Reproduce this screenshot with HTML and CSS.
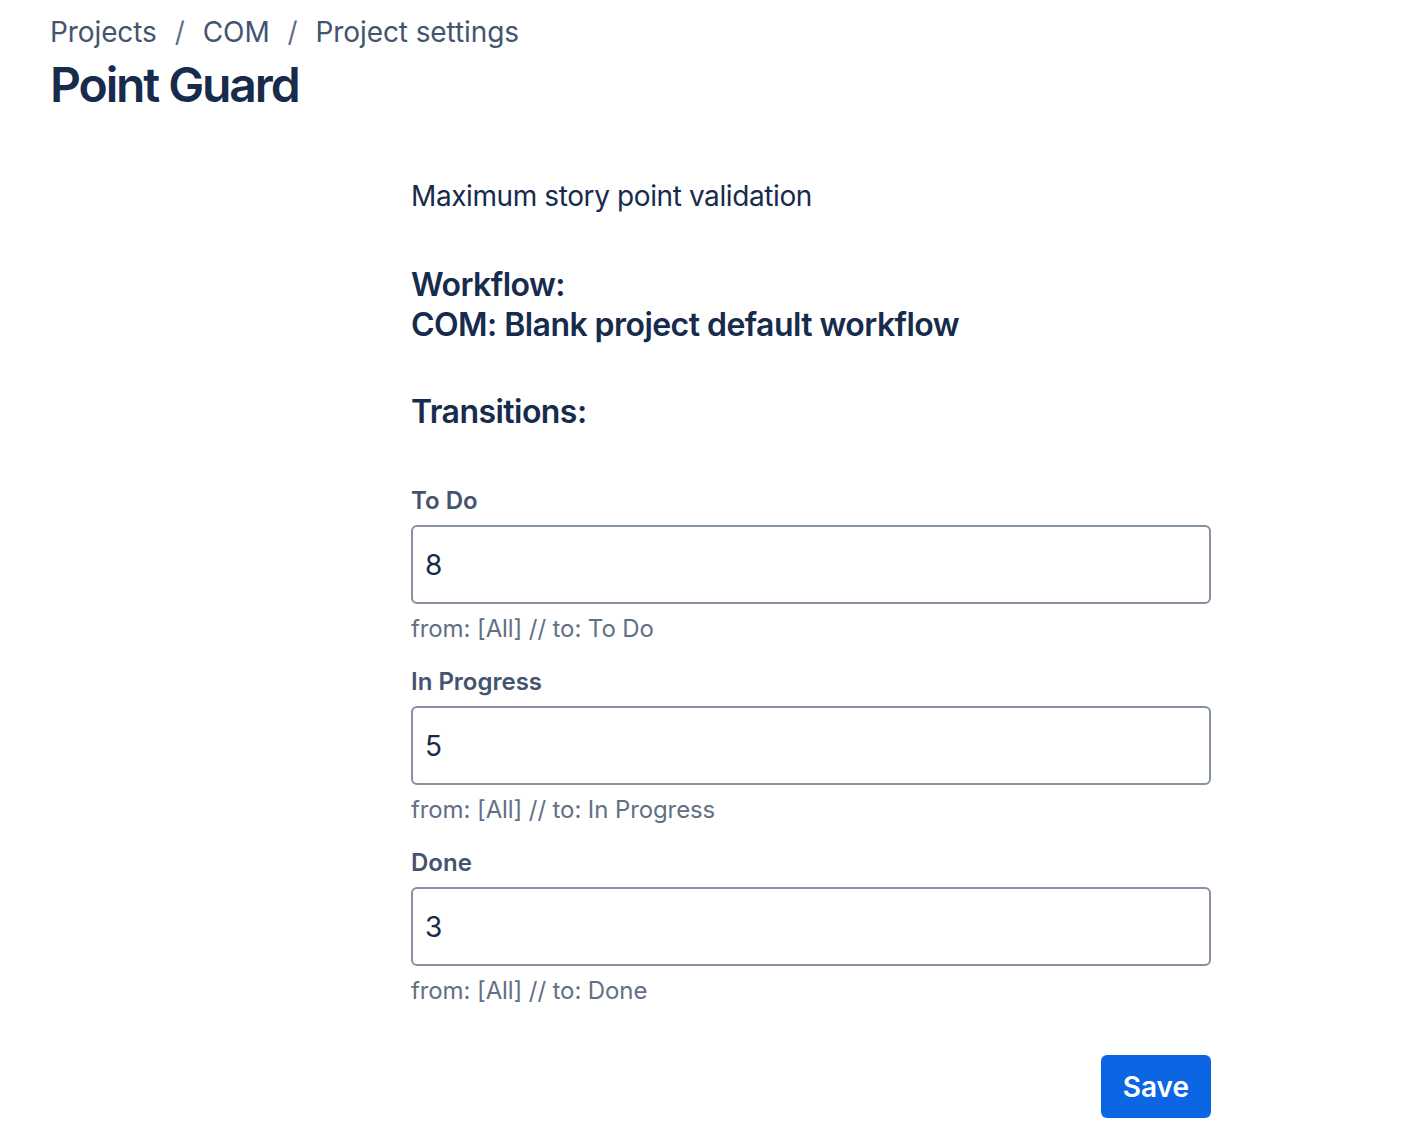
FILE: index.html
```html
<!DOCTYPE html>
<html lang="en">
<head>
    <meta charset="UTF-8">
    <title>Point Guard - Project settings</title>
    <link rel="stylesheet" href="styles.css">
</head>
<body>

    <div class="page">

        <div class="page-header">
            <nav class="breadcrumbs">
                <a href="#">Projects</a>
                <span class="sep">/</span>
                <a href="#">COM</a>
                <span class="sep">/</span>
                <a href="#">Project settings</a>
            </nav>
            <h1 class="page-title">Point Guard</h1>
        </div>

        <form class="settings">
            <p class="intro">Maximum story point validation</p>

            <h2 class="workflow">Workflow:<br>COM: Blank project default workflow</h2>

            <h2 class="transitions">Transitions:</h2>

            <div class="field">
                <label for="todo">To Do</label>
                <input type="text" id="todo" value="8">
                <p class="helper">from: [All] // to: To Do</p>
            </div>

            <div class="field">
                <label for="progress">In Progress</label>
                <input type="text" id="progress" value="5">
                <p class="helper">from: [All] // to: In Progress</p>
            </div>

            <div class="field">
                <label for="done">Done</label>
                <input type="text" id="done" value="3">
                <p class="helper">from: [All] // to: Done</p>
            </div>

            <div class="actions">
                <button type="button" class="save-btn">Save</button>
            </div>
        </form>

    </div>

</body>
</html>
```

FILE: styles.css
```css
:root {
    --textColor: #172b4d;
    --subtleText: #44546f;
    --helperText: #626f86;
    --borderColor: #8590a2;
    --brandBlue: #0c66e4;
    --mainFont: Inter, "Noto Sans", "Liberation Sans", sans-serif;
}
body {
    margin: 0;
    padding: 0;
    background-color: #ffffff;
    color: var(--textColor);
    font-family: var(--mainFont);
}
.page {
    padding: 12px 50px 40px 50px;
}
.breadcrumbs {
    display: flex;
    align-items: center;
    gap: 18px;
    font-size: 28px;
    line-height: 40px;
    letter-spacing: -0.1px;
}
.breadcrumbs a {
    color: var(--subtleText);
    text-decoration: none;
}
.breadcrumbs .sep {
    color: #626f86;
}
.page-title {
    margin: 5px 0 0 0;
    font-size: 48px;
    line-height: 56px;
    font-weight: 600;
    letter-spacing: -2.1px;
}
.settings {
    width: 800px;
    margin: 63px 0 0 361px;
}
.intro {
    margin: 0;
    font-size: 28px;
    line-height: 40px;
    letter-spacing: -0.4px;
}
.workflow {
    margin: 49px 0 0 0;
    font-size: 32px;
    line-height: 40px;
    font-weight: 600;
    letter-spacing: -0.55px;
}
.transitions {
    margin: 47px 0 53px 0;
    font-size: 32px;
    line-height: 40px;
    font-weight: 600;
    letter-spacing: -0.55px;
}
.field {
    display: flex;
    flex-direction: column;
    margin-bottom: 21px;
}
.field label {
    font-size: 24px;
    line-height: 32px;
    font-weight: 600;
    color: var(--subtleText);
    margin-bottom: 8px;
}
.field input {
    box-sizing: border-box;
    width: 100%;
    height: 79px;
    padding: 0 12px;
    border: 2px solid var(--borderColor);
    border-radius: 6px;
    font-family: var(--mainFont);
    font-size: 28px;
    color: var(--textColor);
    background-color: #ffffff;
    outline: none;
}
.helper {
    margin: 9px 0 0 0;
    font-size: 24px;
    line-height: 32px;
    color: var(--helperText);
    letter-spacing: -0.1px;
}
.actions {
    display: flex;
    justify-content: flex-end;
    margin-top: 48px;
}
.save-btn {
    background-color: var(--brandBlue);
    color: #ffffff;
    border: none;
    border-radius: 6px;
    height: 63px;
    padding: 0 22px;
    font-family: var(--mainFont);
    font-size: 28px;
    font-weight: 600;
    cursor: pointer;
}
```
